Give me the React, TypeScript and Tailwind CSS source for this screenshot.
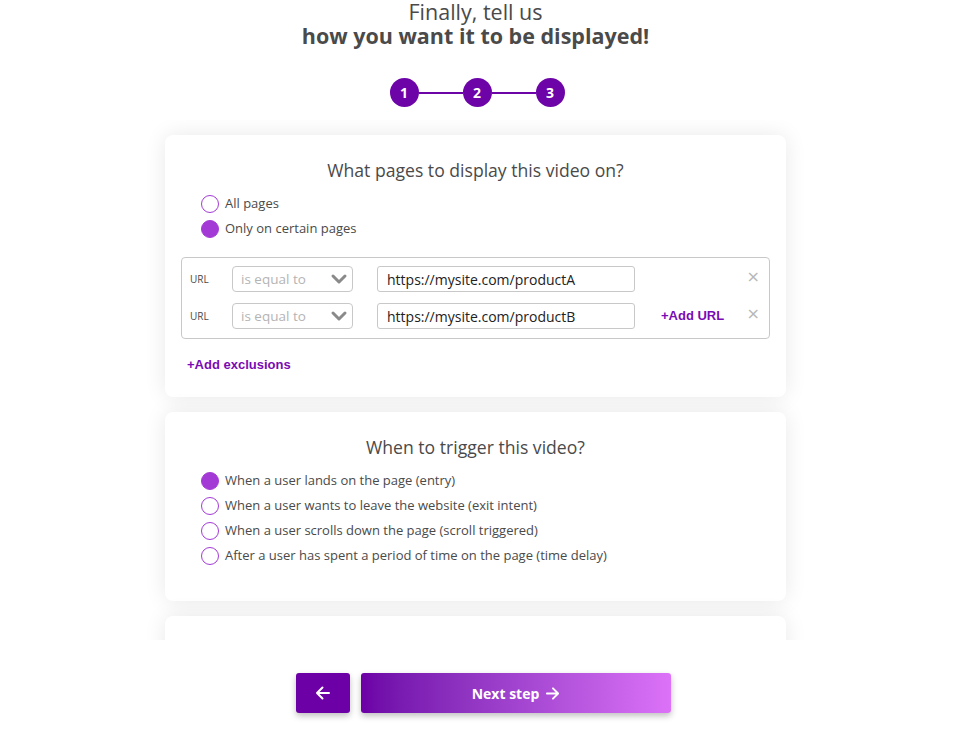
import React from "react";

const font = { fontFamily: '"Open Sans", "Liberation Sans", sans-serif' };

function Radio({ checked, label }: { checked?: boolean; label: string }) {
  return (
    <div className="flex items-center h-[25px]">
      <div
        className={
          "w-[18px] h-[18px] rounded-full border " +
          (checked ? "bg-[#a43ad6] border-[#a43ad6]" : "bg-white border-[#a43ad6]")
        }
      />
      <span className="ml-[6px] text-[13px] text-[#4a4a4a]">{label}</span>
    </div>
  );
}

function UrlRow({ value, addUrl }: { value: string; addUrl?: boolean }) {
  return (
    <div className="flex items-center h-[26px]">
      <span className="w-[50px] shrink-0 pl-[8px] text-[10px] text-[#4a4a4a]">URL</span>
      <div className="w-[121px] shrink-0 h-[26px] border border-[#c8c8c8] rounded-[4px] flex items-center justify-between pl-[8px] pr-[4px]">
        <span className="text-[13.5px] text-[#b4b4b4]">is equal to</span>
        <svg width="18" height="12" viewBox="0 0 18 12">
          <path d="M3 3 L9 9 L15 3" fill="none" stroke="#8a8a8a" strokeWidth="3" strokeLinecap="round" strokeLinejoin="round" />
        </svg>
      </div>
      <div className="ml-[24px] shrink-0 w-[258px] h-[26px] border border-[#c8c8c8] rounded-[3px] flex items-center pl-[9px]">
        <span className="text-[14px] text-[#222]">{value}</span>
      </div>
      <div className="flex-1 flex items-center">
        {addUrl && (
          <span className="ml-[26px] text-[13px] font-bold text-[#7a0bb2]" style={{ fontFamily: '"Liberation Sans", Arial, sans-serif' }}>
            +Add URL
          </span>
        )}
      </div>
      <span className="text-[16px] leading-none text-[#b8b8b8] -mt-[4px] mr-[1px]" style={{ fontFamily: '"DejaVu Sans", sans-serif' }}>×</span>
    </div>
  );
}

export default function App() {
  return (
    <div className="w-[962px] h-[740px] bg-white relative overflow-hidden" style={font}>
      <div className="w-[951px]">
        <div className="flex flex-col items-center">
          <div className="text-[21.5px] leading-[24px] text-[#4a4a4a]">Finally, tell us</div>
          <div className="text-[21.5px] leading-[24px] font-bold text-[#4a4a4a]">how you want it to be displayed!</div>
          <div className="flex items-center mt-[30px] ml-[3px]">
            {[1, 2, 3].map((n, i) => (
              <React.Fragment key={n}>
                {i > 0 && <div className="w-[44px] h-[2px] bg-[#6c04a8]" />}
                <div className="w-[29px] h-[29px] rounded-full bg-[#6c04a8] flex items-center justify-center text-white text-[14px] font-bold">
                  {n}
                </div>
              </React.Fragment>
            ))}
          </div>
        </div>

        <div className="h-[520px] mt-[13px] overflow-hidden flex flex-col items-center pt-[15px] gap-[15px]">
          <div className="w-[621px] shrink-0 bg-white rounded-[8px] shadow-[0_0_22px_rgba(0,0,0,0.09)] pt-[24px] pb-[22px] px-[16px]">
            <div className="text-center text-[17.6px] text-[#4a4a4a] leading-[22px]">What pages to display this video on?</div>
            <div className="ml-[20px] mt-[10px]">
              <Radio label="All pages" />
              <Radio checked label="Only on certain pages" />
            </div>
            <div className="mt-[16px] border border-[#c8c8c8] rounded-[4px] pt-[8px] pb-[9px] pr-[8px] flex flex-col gap-[11px]">
              <UrlRow value="https://mysite.com/productA" />
              <UrlRow value="https://mysite.com/productB" addUrl />
            </div>
            <div className="mt-[16px] ml-[6px] text-[13px] font-bold text-[#7a0bb2]" style={{ fontFamily: '"Liberation Sans", Arial, sans-serif' }}>
              +Add exclusions
            </div>
          </div>

          <div className="w-[621px] shrink-0 bg-white rounded-[8px] shadow-[0_0_22px_rgba(0,0,0,0.09)] pt-[24px] pb-[32px] px-[16px]">
            <div className="text-center text-[17.6px] text-[#4a4a4a] leading-[22px]">When to trigger this video?</div>
            <div className="ml-[20px] mt-[11px]">
              <Radio checked label="When a user lands on the page (entry)" />
              <Radio label="When a user wants to leave the website (exit intent)" />
              <Radio label="When a user scrolls down the page (scroll triggered)" />
              <Radio label="After a user has spent a period of time on the page (time delay)" />
            </div>
          </div>

          <div className="w-[621px] h-[200px] shrink-0 bg-white rounded-[8px] shadow-[0_0_22px_rgba(0,0,0,0.09)]" />
        </div>

        <div className="flex justify-center mt-[33px] gap-[11px] pl-[16px]">
          <div className="w-[54px] h-[40px] bg-[#6c00a6] rounded-[3px] shadow-[0_3px_6px_rgba(0,0,0,0.25)] flex items-center justify-center">
            <svg width="16" height="16" viewBox="0 0 16 16">
              <path d="M14 8 H2 M7.5 2.5 L2 8 L7.5 13.5" fill="none" stroke="white" strokeWidth="2" strokeLinecap="round" strokeLinejoin="round" />
            </svg>
          </div>
          <div className="w-[310px] h-[40px] rounded-[3px] bg-gradient-to-r from-[#6c00a6] to-[#dc72f8] shadow-[0_3px_6px_rgba(0,0,0,0.25)] flex items-center justify-center gap-[6px]">
            <span className="text-white font-bold text-[14px]">Next step</span>
            <svg width="15" height="15" viewBox="0 0 16 16">
              <path d="M2 8 H14 M8.5 2.5 L14 8 L8.5 13.5" fill="none" stroke="white" strokeWidth="2" strokeLinecap="round" strokeLinejoin="round" />
            </svg>
          </div>
        </div>
      </div>
    </div>
  );
}
